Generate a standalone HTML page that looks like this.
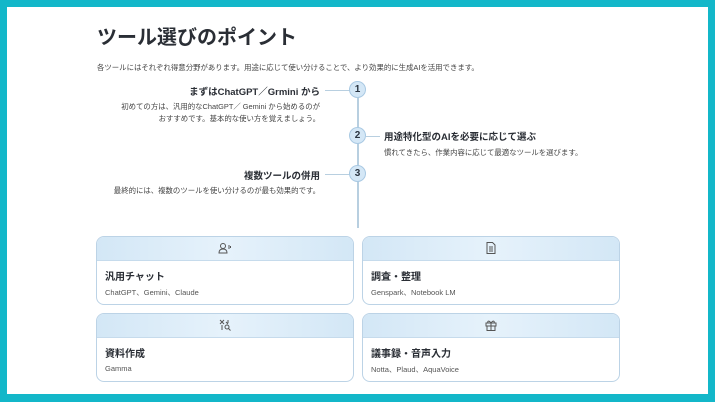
<!DOCTYPE html><html><head><meta charset="utf-8"><style>
body{margin:0;width:715px;height:402px;overflow:hidden;background:#13b7c9;font-family:"Liberation Sans","Noto Sans CJK JP",sans-serif;color:#333}
.pg{position:absolute;left:7px;top:7px;width:701px;height:387px;background:#fff}
.a{position:absolute;white-space:nowrap}
h1{position:absolute;left:97px;top:21px;margin:0;font-size:20px;font-weight:bold;color:#2a2e35}
.line{position:absolute;left:357px;top:90px;width:1.5px;height:138px;background:#b8cfe0}
.c{position:absolute;width:15px;height:15px;border-radius:50%;background:#d4e7f6;border:1.5px solid #a9c9e3;font-size:10px;font-weight:bold;color:#2a3440;text-align:center;line-height:15px}
.h{position:absolute;height:1px;background:#b8cfe0}
.t{font-size:9.5px;font-weight:bold;color:#2a2e35}
.s{font-size:7.4px;color:#444}
.card{position:absolute;width:256px;height:67px;border:1px solid #bcd3e6;border-radius:8px;overflow:hidden;background:#fff}
.card .hd{height:23px;background:linear-gradient(90deg,#d3e7f6,#e6f2fb,#d3e7f6);border-bottom:1px solid #c6dbec;text-align:center}
.card .hd svg{margin-top:5px}
.card .ti{position:absolute;left:8px;top:31px;font-size:10px;font-weight:bold;color:#2a2e35}
.card .sb{position:absolute;left:8px;top:50px;font-size:7.5px;color:#555}
</style></head><body><div class="pg"></div>
<h1>ツール選びのポイント</h1>
<div class="a s" style="left:97px;top:62px">各ツールにはそれぞれ得意分野があります。用途に応じて使い分けることで、より効果的に生成AIを活用できます。</div>
<div class="line"></div>
<div class="h" style="left:325px;top:90px;width:25px"></div>
<div class="h" style="left:366px;top:136px;width:14px"></div>
<div class="h" style="left:325px;top:174px;width:25px"></div>
<div class="c" style="left:349px;top:81px">1</div>
<div class="c" style="left:349px;top:127px">2</div>
<div class="c" style="left:349px;top:165px">3</div>
<div class="a t" style="right:395px;top:84px">まずはChatGPT／Grmini から</div>
<div class="a s" style="right:395px;top:101px;text-align:right;line-height:12px">初めての方は、汎用的なChatGPT／ Gemini から始めるのが<br>おすすめです。基本的な使い方を覚えましょう。</div>
<div class="a t" style="left:384px;top:129px">用途特化型のAIを必要に応じて選ぶ</div>
<div class="a s" style="left:384px;top:147px">慣れてきたら、作業内容に応じて最適なツールを選びます。</div>
<div class="a t" style="right:395px;top:168px">複数ツールの併用</div>
<div class="a s" style="right:395px;top:185px">最終的には、複数のツールを使い分けるのが最も効果的です。</div>
<div class="card" style="left:96px;top:236px"><div class="hd"><svg width="14" height="12" viewBox="0 0 14 12" fill="none" stroke="#555" stroke-width="1"><circle cx="5" cy="4" r="2.5"/><path d="M1 11c0-3 2-4 4-4s4 1 4 4z"/><path d="M11 3v4M12.5 4v2"/></svg></div><div class="ti">汎用チャット</div><div class="sb">ChatGPT、Gemini、Claude</div></div>
<div class="card" style="left:362px;top:236px"><div class="hd"><svg width="10" height="12" viewBox="0 0 10 12" fill="none" stroke="#555" stroke-width="1"><path d="M1 .5h5.5l2.5 2.5v8.5h-8z"/><path d="M3 5h4M3 7h4M3 9h4"/></svg></div><div class="ti">調査・整理</div><div class="sb">Genspark、Notebook LM</div></div>
<div class="card" style="left:96px;top:313px"><div class="hd"><svg width="12" height="12" viewBox="0 0 12 12" fill="none" stroke="#555" stroke-width="1"><path d="M1 1l4 4M5 1L1 5M3 6v5M7 3l2 2M9 1v3"/><circle cx="8" cy="8" r="2"/><path d="M9.5 9.5l2 2"/></svg></div><div class="ti">資料作成</div><div class="sb">Gamma</div></div>
<div class="card" style="left:362px;top:313px"><div class="hd"><svg width="12" height="12" viewBox="0 0 12 12" fill="none" stroke="#555" stroke-width="1"><rect x="1" y="4" width="10" height="3"/><path d="M2 7v4.5h8V7M6 4v7.5M6 4C4 1 2 2 3 4M6 4c2-3 4-2 3 0"/></svg></div><div class="ti">議事録・音声入力</div><div class="sb">Notta、Plaud、AquaVoice</div></div>
</body></html>
